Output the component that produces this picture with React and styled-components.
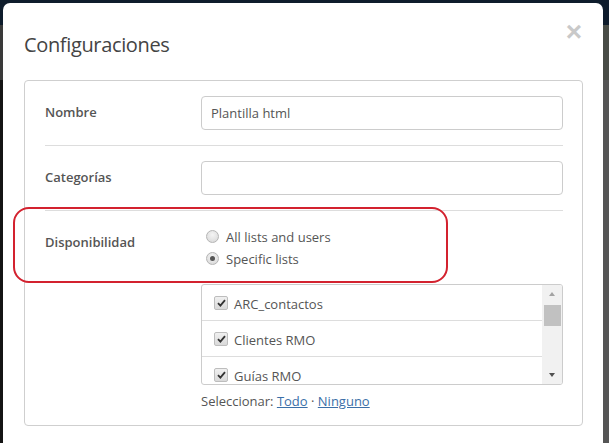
import React from "react";
import styled, { createGlobalStyle } from "styled-components";

const Global = createGlobalStyle`
  html, body { margin: 0; padding: 0; }
  body {
    width: 609px; height: 443px; overflow: hidden;
    font-family: "Open Sans", "Liberation Sans", sans-serif;
    background: #161616;
  }
`;

const Backdrop = styled.div`
  position: relative;
  width: 609px;
  height: 443px;
  display: grid;
  grid-template-rows: 25px 55px 1fr;
  grid-template-columns: 1fr 6px;
  overflow: hidden;
`;

const TopBar = styled.div`
  grid-column: 1 / 3;
  background: #0e1c2c;
`;

const LeftBand = styled.div`
  background: ${(p) => p.$c};
`;

const Modal = styled.div`
  position: absolute;
  left: 3px;
  top: 3px;
  width: 600px;
  height: 440px;
  background: #fff;
  border-radius: 7px 7px 0 0;
  box-sizing: border-box;
  padding: 30px 20px 0 21px;
  display: flex;
  flex-direction: column;
`;

const Title = styled.h4`
  margin: 0;
  font-size: 20px;
  line-height: 24px;
  font-weight: 400;
  color: #444;
  letter-spacing: -0.35px;
`;

const Close = styled.span`
  position: absolute;
  right: 21px;
  top: 15px;
  font-family: "Liberation Sans", sans-serif;
  font-size: 28px;
  font-weight: 700;
  line-height: 28px;
  color: #c9c9c9;
`;

const Panel = styled.div`
  margin-top: 23px;
  border: 1px solid #cfcfcf;
  border-radius: 4px;
  padding: 0 19px 0 20px;
`;

const Row = styled.div`
  display: flex;
  padding: 15px 0;
  border-bottom: ${(p) => (p.$last ? "none" : "1px solid #ddd")};
`;

const Label = styled.label`
  width: 156px;
  flex: none;
  padding-top: 7px;
  font-size: 13px;
  line-height: 19px;
  font-weight: 600;
  color: #555;
`;

const Field = styled.div`
  flex: 1;
  display: flex;
  flex-direction: column;
`;

const Input = styled.div`
  height: 34px;
  box-sizing: border-box;
  border: 1px solid #ccc;
  border-radius: 4px;
  padding: 0 9px;
  display: flex;
  align-items: center;
  font-size: 13px;
  color: #555;
`;

const RadioRow = styled.div`
  height: 22px;
  display: flex;
  align-items: center;
  gap: 7px;
  padding-left: 5px;
  font-size: 13px;
  color: #555;
`;

const RadioDot = styled.span`
  width: 11px;
  height: 11px;
  border-radius: 50%;
  border: 1px solid #b5b5b5;
  background: radial-gradient(circle at 50% 35%, #f4f4f4, #d6d6d6);
  display: flex;
  align-items: center;
  justify-content: center;
  margin-top: -2px;
  &::after {
    content: "";
    width: 5px;
    height: 5px;
    border-radius: 50%;
    background: ${(p) => (p.$on ? "#555" : "transparent")};
  }
`;

const ListBox = styled.div`
  margin-top: 14px;
  height: 101px;
  box-sizing: border-box;
  border: 1px solid #ccc;
  border-radius: 3px;
  display: flex;
  overflow: hidden;
`;

const Items = styled.div`
  flex: 1;
  overflow: hidden;
`;

const Item = styled.div`
  height: 36px;
  border-bottom: 1px solid #ddd;
  display: flex;
  align-items: center;
  padding: 3px 0 0 12px;
  box-sizing: border-box;
  gap: 6px;
  font-size: 13px;
  color: #555;
`;

const Check = styled.span`
  width: 12px;
  height: 12px;
  border-radius: 2px;
  border: 1px solid #bdbdbd;
  background: linear-gradient(#f0f0f0, #d9d9d9);
  display: flex;
  align-items: center;
  justify-content: center;
  margin-top: -3px;
`;

const Scroll = styled.div`
  width: 20px;
  flex: none;
  background: #f1f1f1;
  display: flex;
  flex-direction: column;
  align-items: center;
`;

const Arrow = styled.span`
  height: 18px;
  display: flex;
  align-items: center;
  justify-content: center;
  width: 100%;
  &::after {
    content: "";
    border-left: 3.5px solid transparent;
    border-right: 3.5px solid transparent;
    ${(p) =>
      p.$down
        ? "border-top: 4px solid #505050;"
        : "border-bottom: 4px solid #a3a3a3;"}
  }
`;

const Thumb = styled.span`
  width: 17px;
  height: 21px;
  background: #c1c1c1;
  margin-top: 2px;
`;

const Spacer = styled.span`
  flex: 1;
`;

const Select = styled.div`
  margin-top: 7px;
  font-size: 13px;
  line-height: 18px;
  color: #555;
`;

const Link = styled.a`
  color: #3b6fa8;
  text-decoration: underline;
`;

const Annotation = styled.div`
  position: absolute;
  left: 10px;
  top: 204px;
  width: 435px;
  height: 76px;
  box-sizing: border-box;
  border: 2.5px solid #d3222f;
  border-radius: 16px;
  pointer-events: none;
`;

const CheckIcon = () => (
  <svg width="9" height="8" viewBox="0 0 9 8">
    <path d="M1 4.2 L3.4 6.6 L8 1.2" fill="none" stroke="#333" strokeWidth="1.8" />
  </svg>
);

const lists = ["ARC_contactos", "Clientes RMO", "Guías RMO"];

export default function App() {
  return (
    <>
      <Global />
      <Backdrop>
        <TopBar />
        <LeftBand $c="#3a3a3a" />
        <LeftBand $c="#484c46" />
        <LeftBand $c="#141414" />
        <LeftBand $c="#555555" />
        <Modal>
          <Close>×</Close>
          <Title>Configuraciones</Title>
          <Panel>
            <Row>
              <Label>Nombre</Label>
              <Field>
                <Input>Plantilla html</Input>
              </Field>
            </Row>
            <Row>
              <Label>Categorías</Label>
              <Field>
                <Input />
              </Field>
            </Row>
            <Row $last>
              <Label>Disponibilidad</Label>
              <Field>
                <RadioRow>
                  <RadioDot />
                  All lists and users
                </RadioRow>
                <RadioRow>
                  <RadioDot $on />
                  Specific lists
                </RadioRow>
                <ListBox>
                  <Items>
                    {lists.map((l) => (
                      <Item key={l}>
                        <Check>
                          <CheckIcon />
                        </Check>
                        {l}
                      </Item>
                    ))}
                  </Items>
                  <Scroll>
                    <Arrow />
                    <Thumb />
                    <Spacer />
                    <Arrow $down />
                  </Scroll>
                </ListBox>
                <Select>
                  Seleccionar: <Link href="#">Todo</Link> · <Link href="#">Ninguno</Link>
                </Select>
              </Field>
            </Row>
          </Panel>
          <Annotation />
        </Modal>
      </Backdrop>
    </>
  );
}
